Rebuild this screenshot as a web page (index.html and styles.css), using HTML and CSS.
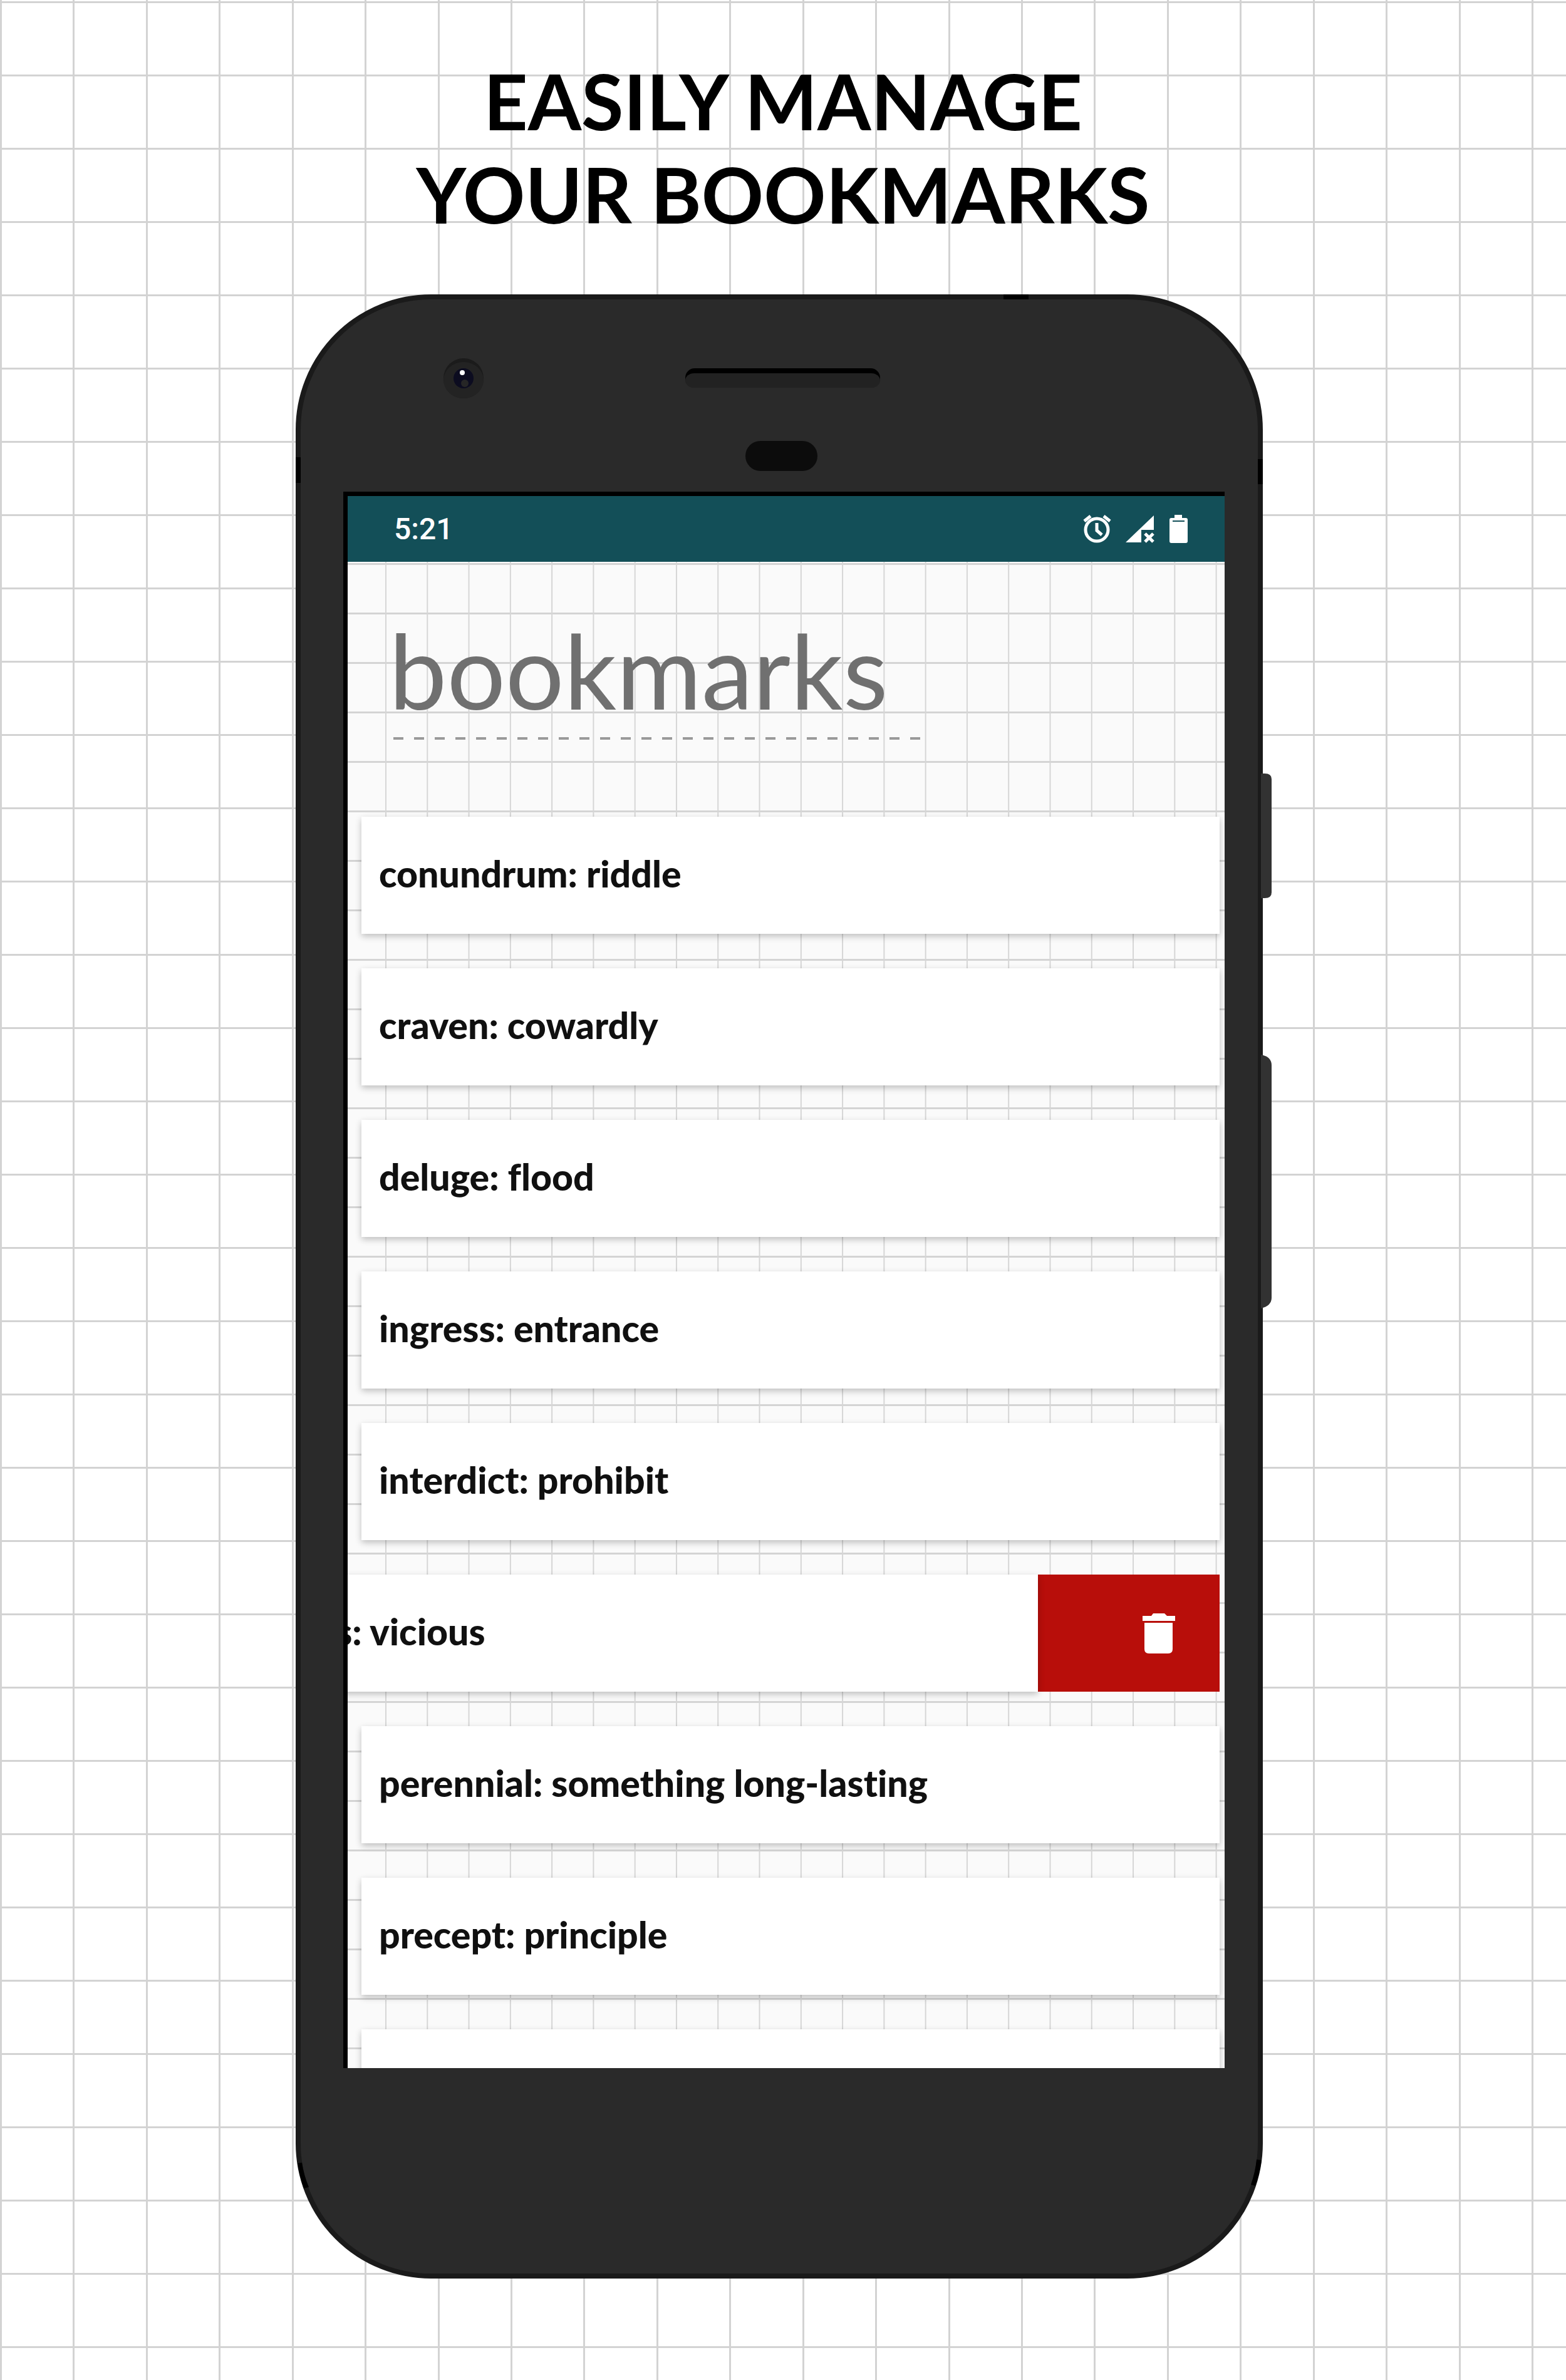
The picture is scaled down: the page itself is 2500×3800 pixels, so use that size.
FILE: index.html
```html
<!DOCTYPE html>
<html lang="en">
<head>
<meta charset="utf-8">
<meta name="viewport" content="width=device-width, initial-scale=1">
<title>Easily manage your bookmarks</title>
<link rel="stylesheet" href="styles.css">
</head>
<body>
<main class="page">
  <h1 class="headline">EASILY MANAGE<br>YOUR BOOKMARKS</h1>

  <div class="phone">
    <svg class="hardware" viewBox="0 0 1544 3168" preserveAspectRatio="none" aria-hidden="true">
      <!-- side buttons -->
      <path d="M1541 765h6q11 0 11 9v181q0 9-11 9h-6z" fill="#323232"/>
      <path d="M1541 1214q17 3 17 17v371q0 13-17 17z" fill="#323232"/>
      <!-- antenna bands -->
      <path d="M1130 0h40v8h-40zM0 260h8v41H0zM1536 263h8v40h-8zM3 2984l7-1q3 20 11 39l-8 2q-7-20-10-40zM1534 2978l8 1q-3 21-10 41l-7-2q7-20 9-40z"/>
      <!-- camera -->
      <circle cx="268" cy="134" r="32" fill="#1b1b1b"/>
      <ellipse cx="268" cy="137" rx="32" ry="29" fill="#232323"/>
      <circle cx="268" cy="134" r="16" fill="#0c0c20"/>
      <circle cx="266" cy="125" r="4" fill="#fff"/>
      <circle cx="270" cy="142" r="6" fill="#262626"/>
      <!-- speaker and sensor -->
      <rect x="622" y="118" width="311" height="31" rx="15"/>
      <rect x="622" y="126" width="311" height="23" rx="14" fill="#222"/>
      <rect x="718" y="234" width="115" height="48" rx="24" fill="#0c0c0c"/>
    </svg>

    <section class="screen" aria-label="Bookmarks">
      <div class="status">
        <time class="clock">5:21</time>
        <div class="status-icons">
          <svg width="45" height="45" viewBox="0 0 45 45" fill="none" stroke="#fff" aria-hidden="true">
            <circle cx="23" cy="24" r="18" stroke-width="5"/>
            <path d="M23 13v12l8 7" stroke-width="5"/>
            <path d="M3 10L13 2M44 10L34 2" stroke-width="5"/>
          </svg>
          <svg width="46" height="45" viewBox="0 0 46 45" fill="#fff" aria-hidden="true">
            <path d="M45 1v23H25v20H0z"/>
            <path d="M31 30l13 13M44 30L31 43" stroke="#fff" stroke-width="5"/>
          </svg>
          <svg width="29" height="45" viewBox="0 0 29 45" aria-hidden="true">
            <path d="M8 0h12v5h6q3 0 3 3v34q0 3-3 3H3q-3 0-3-3V8q0-3 3-3h5z" fill="#fff"/>
            <path d="M5 10h19" stroke="#134f58" stroke-width="2"/>
          </svg>
        </div>
      </div>

      <div class="notebook">
        <header class="title-block">
          <h2 class="title">bookmarks</h2>
          <div class="title-rule"></div>
        </header>

        <ul class="list">
          <li class="row"><div class="card">conundrum: riddle</div></li>
          <li class="row"><div class="card">craven: cowardly</div></li>
          <li class="row"><div class="card">deluge: flood</div></li>
          <li class="row"><div class="card">ingress: entrance</div></li>
          <li class="row"><div class="card">interdict: prohibit</div></li>
          <li class="row row-swiped">
            <div class="card">nefarious: vicious</div>
            <button class="delete" type="button" aria-label="Delete bookmark">
              <svg width="52" height="64" viewBox="0 0 52 64" fill="#fff" aria-hidden="true">
                <path d="M0 4h14l3-4h18l4 4h13v8H0z"/>
                <path d="M3 15h45v42q0 7-7 7H10q-7 0-7-7z"/>
              </svg>
            </button>
          </li>
          <li class="row"><div class="card">perennial: something long-lasting</div></li>
          <li class="row"><div class="card">precept: principle</div></li>
          <li class="row"><div class="card"></div></li>
        </ul>
      </div>
    </section>
  </div>
</main>
</body>
</html>
```

FILE: styles.css
```css
* {
  box-sizing: border-box;
}

body {
  margin: 0;
  font-family: Lato, "Open Sans", sans-serif;
  font-variant-ligatures: none;
  color: #101010;
}

/* Squared paper: 21 columns and a last part column across the window */
.page {
  min-height: 100vh;
  padding: 86px 0 162px;
  overflow: hidden;
  background:
    repeating-linear-gradient(90deg, #d3d3d3 0 3px, transparent 3px calc((100vw - 55px) / 21)),
    linear-gradient(#d3d3d3 3px, transparent 3px) 0 119px / 100% 117px repeat-y,
    #fff;
}

.headline {
  margin: 0 0 86px;
  font-size: 123px;
  line-height: 149px;
  font-weight: 700;
  text-align: center;
  color: #000;
}

.phone {
  position: relative;
  margin: 0 484px 0 472px;
  padding: 307px 53px 328px 68px;
  border: 8px solid #1a1a1a;
  border-radius: 216px;
  background: #2a2a2a;
}

.hardware {
  position: absolute;
  inset: -8px;
  width: calc(100% + 16px);
  height: calc(100% + 16px);
  overflow: visible;
}

.screen {
  position: relative;
  display: flex;
  flex-direction: column;
  aspect-ratio: 1407 / 2517;
  min-height: 0;
  overflow: hidden;
  border: solid #000;
  border-width: 7px 0 0 7px;
}

.status {
  flex: none;
  display: flex;
  align-items: center;
  justify-content: space-between;
  height: 105px;
  padding: 0 59px 0 74px;
  background: #134f58;
  color: #fff;
}

.clock {
  font: 500 48px/56px Roboto, sans-serif;
}

.status-icons {
  display: flex;
  gap: 24px;
}

.status-icons svg {
  overflow: visible;
}

.notebook {
  flex: 1;
  min-height: 0;
  background:
    linear-gradient(90deg, #d6d6d6 2px, transparent 2px) 60px 0 / calc((100% - 8px) / 21) 100%,
    linear-gradient(#d4d4d4 3px, transparent 3px) 0 81px / 100% 79px,
    #fafafa;
}

.title-block {
  padding: 72px 0 123px;
}

.title {
  margin: 0 66px;
  font-size: 165px;
  line-height: 200px;
  font-weight: 400;
  color: #707070;
}

.title-rule {
  width: 841px;
  max-width: calc(100% - 73px);
  height: 4px;
  margin: 8px 0 0 73px;
  background: repeating-linear-gradient(90deg, #999 0 16px, transparent 16px 33px);
}

.list {
  display: flex;
  flex-direction: column;
  gap: 55px;
  margin: 0;
  padding: 0 8px 0 22px;
  list-style: none;
}

.row {
  display: flex;
  height: 187px;
}

.card {
  flex: 0 0 100%;
  display: flex;
  align-items: center;
  padding: 0 28px 5px;
  background: #fff;
  box-shadow: 0 4px 10px rgba(0, 0, 0, 0.24);
  font-size: 59px;
  line-height: 64px;
  font-weight: 900;
  white-space: nowrap;
}

.row-swiped .card {
  position: relative;
  margin-left: -290px;
}

.delete {
  flex: 0 0 290px;
  display: flex;
  align-items: center;
  justify-content: flex-end;
  padding: 0 71px 0 0;
  border: 0;
  background: #b80e0a;
}
```
